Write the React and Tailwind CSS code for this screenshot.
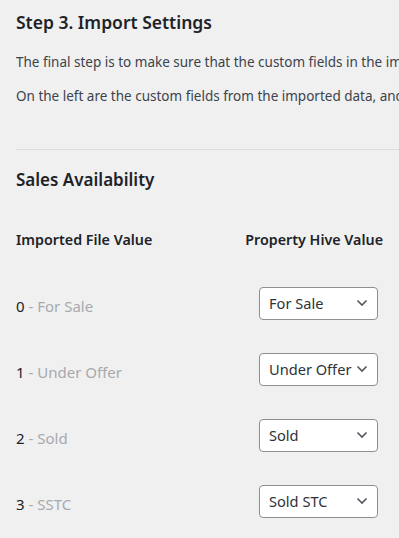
import React from 'react';

const rows = [
  { key: '0', label: 'For Sale', value: 'For Sale' },
  { key: '1', label: 'Under Offer', value: 'Under Offer' },
  { key: '2', label: 'Sold', value: 'Sold' },
  { key: '3', label: 'SSTC', value: 'Sold STC' },
];

function Select({ value }) {
  return (
    <div className="relative w-[119px] h-[33px] bg-white border border-[#8c8f94] rounded-[4px] flex items-center pl-[9px] pt-[2px] text-[14.6px] text-[#2c3338] whitespace-nowrap overflow-hidden">
      <span>{value}</span>
      <svg className="absolute right-[9px] top-1/2 -translate-y-1/2" width="12" height="8" viewBox="0 0 12 8" fill="none">
        <path d="M1.5 1.5 6 6l4.5-4.5" stroke="#50575e" strokeWidth="1.6" />
      </svg>
    </div>
  );
}

export default function App() {
  return (
    <div className="w-[399px] h-[538px] overflow-hidden bg-[#f0f0f1] px-4 font-['Noto_Sans',sans-serif]">
      {/* Heading + intro */}
      <h2 className="mt-[10px] text-[17.5px] leading-[24px] font-semibold text-[#1d2327] whitespace-nowrap">Step 3. Import Settings</h2>
      <div className="w-[383px] overflow-hidden">
        <p className="mt-[18px] text-[13.5px] leading-[20px] text-[#3c434a] whitespace-nowrap">
          The final step is to make sure that the custom fields in the imported data are mapped to the appropriate fields in Property Hive.
        </p>
        <p className="mt-[14px] text-[13.5px] leading-[20px] text-[#3c434a] whitespace-nowrap">
          On the left are the custom fields from the imported data, and on the right are the values they should map to.
        </p>
      </div>
      <div className="mt-[43px] border-t border-[#dcdcde] w-[383px]" />

      {/* Sales availability mapping */}
      <h3 className="mt-[18px] text-[17px] leading-[24px] font-semibold text-[#1d2327]">Sales Availability</h3>
      <div className="mt-[38px] flex text-[14.3px] leading-[20px] font-semibold text-[#1d2327] whitespace-nowrap">
        <div className="w-[233px]">Imported File Value</div>
        <div className="w-[138px]">Property Hive Value</div>
      </div>
      <div className="mt-[20px]">
        {rows.map((r) => (
          <div key={r.key} className="h-[66px] flex items-center text-[15px]">
            <div className="w-[243px] pt-[6px] whitespace-nowrap">
              <span className="text-[#1d2327]">{r.key}</span>
              <span className="text-[#a7aaad]"> - {r.label}</span>
            </div>
            <Select value={r.value} />
          </div>
        ))}
      </div>
    </div>
  );
}
